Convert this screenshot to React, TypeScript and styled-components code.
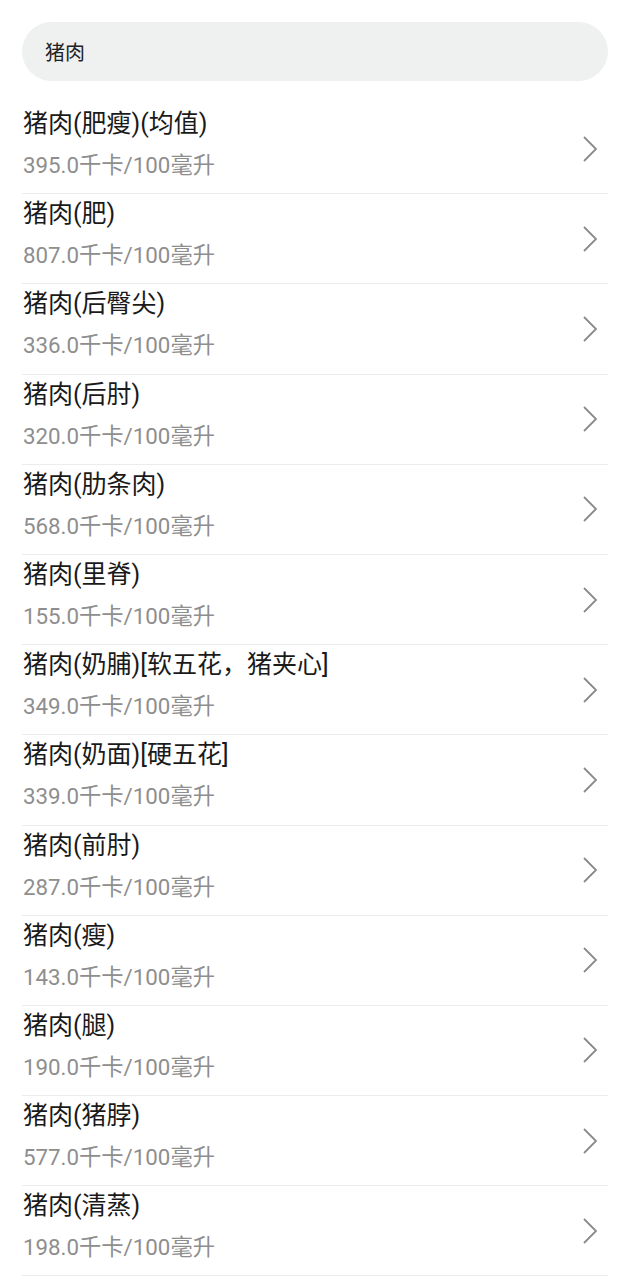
import React from "react";
import styled, { createGlobalStyle } from "styled-components";

const Global = createGlobalStyle`
  html, body { margin: 0; padding: 0; background: #ffffff; }
  body { font-family: Roboto, "Noto Sans CJK SC", sans-serif; }
`;

const Page = styled.div`
  width: 630px;
  padding: 22px 22px 0 22px;
  box-sizing: border-box;
  display: flex;
  flex-direction: column;
  gap: 23px;
`;

const SearchBar = styled.div`
  height: 59px;
  border-radius: 30px;
  background: #eef1f0;
  display: flex;
  align-items: center;
  padding-left: 23px;
  font-size: 20px;
  color: #222;
`;

const List = styled.div`
  display: flex;
  flex-direction: column;
`;

const Row = styled.div`
  height: 89.2px;
  border-bottom: 1px solid #ececec;
  display: flex;
  align-items: center;
  justify-content: space-between;
`;

const Texts = styled.div`
  display: flex;
  flex-direction: column;
  align-self: flex-start;
  padding-top: 5px;
  padding-left: 1px;
`;

const Title = styled.div`
  font-size: 25px;
  line-height: 30px;
  color: #1a1a1a;
`;

const Sub = styled.div`
  margin-top: 12px;
  font-size: 22.3px;
  line-height: 28px;
  color: #8e8e8e;
`;

const Chevron = styled.svg`
  width: 16px;
  height: 26px;
  margin-right: 10px;
`;

const items: [string, string][] = [
  ["猪肉(肥瘦)(均值)", "395.0"],
  ["猪肉(肥)", "807.0"],
  ["猪肉(后臀尖)", "336.0"],
  ["猪肉(后肘)", "320.0"],
  ["猪肉(肋条肉)", "568.0"],
  ["猪肉(里脊)", "155.0"],
  ["猪肉(奶脯)[软五花，猪夹心]", "349.0"],
  ["猪肉(奶面)[硬五花]", "339.0"],
  ["猪肉(前肘)", "287.0"],
  ["猪肉(瘦)", "143.0"],
  ["猪肉(腿)", "190.0"],
  ["猪肉(猪脖)", "577.0"],
  ["猪肉(清蒸)", "198.0"],
];

export default function App() {
  return (
    <>
      <Global />
      <Page>
        <SearchBar>猪肉</SearchBar>
        <List>
          {items.map(([t, k]) => (
            <Row key={t}>
              <Texts>
                <Title>{t}</Title>
                <Sub>{k}千卡/100毫升</Sub>
              </Texts>
              <Chevron viewBox="0 0 16 26">
                <path d="M2 1 L14 13 L2 25" fill="none" stroke="#8a8a8a" strokeWidth="1.8" />
              </Chevron>
            </Row>
          ))}
        </List>
      </Page>
    </>
  );
}
